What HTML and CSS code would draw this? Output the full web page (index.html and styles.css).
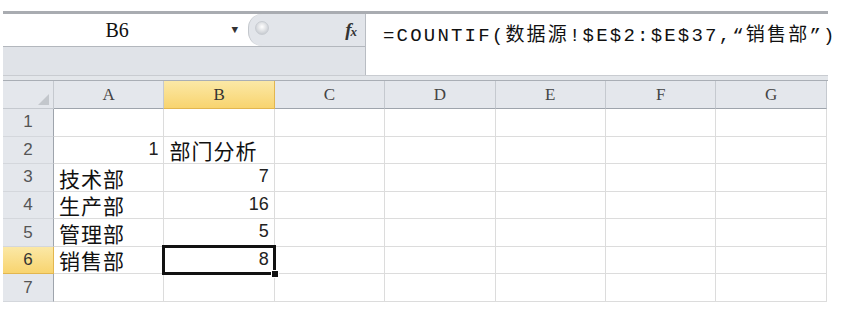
FILE: index.html
```html
<!DOCTYPE html>
<html lang="zh-CN">
<head>
    <meta charset="UTF-8">
    <title>部门分析</title>
    <link rel="stylesheet" href="styles.css">
</head>
<body>
    <!-- 编辑栏 -->
    <div class="formula-bar">
        <div class="fb-left">
            <div class="fb-top">
                <div class="name-box">
                    <span class="name">B6</span>
                    <span class="drop">&#9660;</span>
                </div>
                <div class="fb-tools">
                    <span class="knob"></span>
                    <span class="fx">f<sub>x</sub></span>
                </div>
            </div>
            <div class="fb-bottom"></div>
        </div>
        <div class="formula">=COUNTIF(数据源!$E$2:$E$37,“销售部”)</div>
    </div>

    <div class="gap"></div>

    <!-- 工作表 -->
    <div class="sheet">
        <div class="hd corner"><span class="tri"></span></div>
        <div class="hd col">A</div>
        <div class="hd col active">B</div>
        <div class="hd col">C</div>
        <div class="hd col">D</div>
        <div class="hd col">E</div>
        <div class="hd col">F</div>
        <div class="hd col">G</div>

        <div class="hd row">1</div>
        <div class="cell"></div><div class="cell"></div><div class="cell"></div><div class="cell"></div><div class="cell"></div><div class="cell"></div><div class="cell"></div>

        <div class="hd row">2</div>
        <div class="cell num">1</div><div class="cell">部门分析</div><div class="cell"></div><div class="cell"></div><div class="cell"></div><div class="cell"></div><div class="cell"></div>

        <div class="hd row">3</div>
        <div class="cell">技术部</div><div class="cell num">7</div><div class="cell"></div><div class="cell"></div><div class="cell"></div><div class="cell"></div><div class="cell"></div>

        <div class="hd row">4</div>
        <div class="cell">生产部</div><div class="cell num">16</div><div class="cell"></div><div class="cell"></div><div class="cell"></div><div class="cell"></div><div class="cell"></div>

        <div class="hd row">5</div>
        <div class="cell">管理部</div><div class="cell num">5</div><div class="cell"></div><div class="cell"></div><div class="cell"></div><div class="cell"></div><div class="cell"></div>

        <div class="hd row active">6</div>
        <div class="cell">销售部</div><div class="cell num selected">8<span class="handle"></span></div><div class="cell"></div><div class="cell"></div><div class="cell"></div><div class="cell"></div><div class="cell"></div>

        <div class="hd row">7</div>
        <div class="cell"></div><div class="cell"></div><div class="cell"></div><div class="cell"></div><div class="cell"></div><div class="cell"></div><div class="cell"></div>
    </div>
</body>
</html>
```

FILE: styles.css
```css
body {
    margin: 0;
    padding: 11px 0 0 3px;
    background: #fff;
    font-family: "Liberation Mono", "Noto Sans CJK SC", monospace;
    color: #111;
}

/* 编辑栏 */
.formula-bar {
    display: flex;
    width: 825px;
    border-top: 3px solid #a9acb1;
    height: 61px;
}

.fb-left {
    width: 362px;
    flex-shrink: 0;
    display: flex;
    flex-direction: column;
    border-right: 1px solid #b9bdc3;
}

.fb-top {
    display: flex;
    height: 32px;
    border-bottom: 1px solid #b3b7bd;
}

.name-box {
    width: 245px;
    display: flex;
    align-items: center;
    background: #fff;
}

.name {
    flex: 1;
    text-align: center;
    font-size: 20px;
    font-family: "Liberation Serif", serif;
}

.drop {
    font-size: 11px;
    color: #333;
    margin-right: 10px;
}

.fb-tools {
    flex: 1;
    display: flex;
    align-items: center;
    justify-content: space-between;
    background: #e2e5ea;
    border-left: 1px solid #c3c7cc;
    border-radius: 14px 0 0 14px;
    padding: 0 8px 0 6px;
}

.knob {
    width: 12px;
    height: 12px;
    border-radius: 50%;
    background: radial-gradient(circle at 50% 40%, #fff, #b9bec5);
    border: 1px solid #c8ccd2;
    margin-top: -4px;
}

.fx {
    font-family: "Liberation Serif", serif;
    font-style: italic;
    font-weight: bold;
    font-size: 19px;
    color: #333;
}

.fx sub {
    font-size: 13px;
    vertical-align: 0;
    margin-left: -1px;
}

.fb-bottom {
    flex: 1;
    background: #e0e3e8;
}

.formula {
    flex: 1;
    min-width: 0;
    background: #fff;
    font-size: 19px;
    white-space: nowrap;
    padding: 5px 0 0 17px;
    letter-spacing: 2.2px;
    font-family: "Liberation Mono", "Noto Sans CJK SC", monospace;
}

.gap {
    width: 825px;
    height: 4px;
    background: #e3e6ea;
    border-top: 1px solid #c9ccd1;
    border-bottom: 1px solid #a9aeb5;
}

/* 工作表 */
.sheet {
    display: grid;
    grid-template-columns: 51px repeat(7, 110.4px);
    grid-template-rows: 28px repeat(7, 27.57px);
    width: 824px;
}

.hd {
    background: #e4e7ec;
    color: #444;
    font-size: 17px;
    display: flex;
    align-items: center;
    justify-content: center;
    border-right: 1px solid #c5c9cf;
    border-bottom: 1px solid #c5c9cf;
    font-family: "Liberation Serif", serif;
}

.col {
    border-bottom-color: #9ea4ac;
}

.row {
    font-family: "Liberation Sans", sans-serif;
    color: #555;
    border-right-color: #9ea4ac;
    border-bottom-color: #d4d7dc;
}

.hd.active {
    background: linear-gradient(#fbe8a6, #f8d46f);
    border-color: #e2b64f;
    color: #333;
}

.corner {
    position: relative;
}

.tri {
    position: absolute;
    right: 4px;
    bottom: 3px;
    width: 0;
    height: 0;
    border-left: 11px solid transparent;
    border-bottom: 11px solid #c3c7cc;
}

.cell {
    border-right: 1px solid #dcdcdc;
    border-bottom: 1px solid #dcdcdc;
    font-size: 21px;
    letter-spacing: 1px;
    display: flex;
    align-items: flex-end;
    padding: 0 5px 0 5px;
    white-space: nowrap;
    font-family: "Noto Sans CJK SC", sans-serif;
    line-height: 1.2;
}

.num {
    justify-content: flex-end;
    font-family: "Liberation Sans", sans-serif;
    font-size: 18px;
    letter-spacing: 0;
    padding-bottom: 3px;
    color: #222;
}

/* 选中单元格 */
.selected {
    position: relative;
}

.selected::after {
    content: "";
    position: absolute;
    left: -2px;
    top: -2px;
    right: -2px;
    bottom: -2px;
    border: 3px solid #111;
}

.handle {
    position: absolute;
    right: -5px;
    bottom: -5px;
    width: 6px;
    height: 6px;
    background: #111;
    border: 1px solid #fff;
    z-index: 1;
}
```
